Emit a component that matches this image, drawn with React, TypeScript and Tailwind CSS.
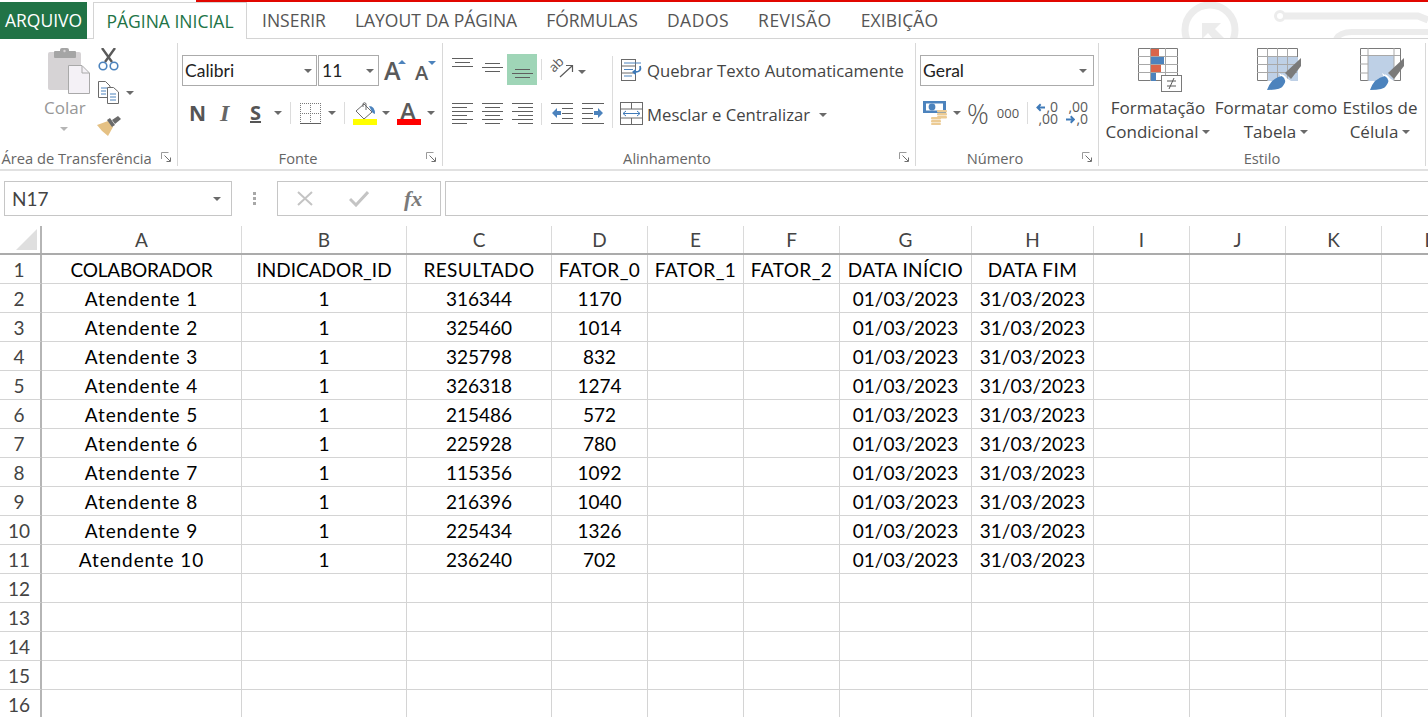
import type { ReactNode } from "react";

const columns = ["A", "B", "C", "D", "E", "F", "G", "H", "I", "J", "K", "L"];

const rows: string[][] = [
  ["COLABORADOR", "INDICADOR_ID", "RESULTADO", "FATOR_0", "FATOR_1", "FATOR_2", "DATA INÍCIO", "DATA FIM"],
  ["Atendente 1", "1", "316344", "1170", "", "", "01/03/2023", "31/03/2023"],
  ["Atendente 2", "1", "325460", "1014", "", "", "01/03/2023", "31/03/2023"],
  ["Atendente 3", "1", "325798", "832", "", "", "01/03/2023", "31/03/2023"],
  ["Atendente 4", "1", "326318", "1274", "", "", "01/03/2023", "31/03/2023"],
  ["Atendente 5", "1", "215486", "572", "", "", "01/03/2023", "31/03/2023"],
  ["Atendente 6", "1", "225928", "780", "", "", "01/03/2023", "31/03/2023"],
  ["Atendente 7", "1", "115356", "1092", "", "", "01/03/2023", "31/03/2023"],
  ["Atendente 8", "1", "216396", "1040", "", "", "01/03/2023", "31/03/2023"],
  ["Atendente 9", "1", "225434", "1326", "", "", "01/03/2023", "31/03/2023"],
  ["Atendente 10", "1", "236240", "702", "", "", "01/03/2023", "31/03/2023"],
];

const gridCols =
  "grid grid-cols-[42px_200px_165px_145px_96px_96px_96px_132px_122px_96px_96px_96px_96px]";

function Caret({ className = "", color = "border-t-[#6a6a6a]" }: { className?: string; color?: string }) {
  return (
    <span
      className={`inline-block w-0 h-0 border-x-[4px] border-x-transparent border-t-[4px] ${color} ${className}`}
    />
  );
}

function Launcher() {
  return (
    <svg width="11" height="11" viewBox="0 0 11 11" className="absolute right-[5px] bottom-[3px]">
      <path d="M0.5 7V0.5H7.5" fill="none" stroke="#9a9a9a" />
      <path d="M3.5 3.5L9 9M9.5 5.5V9.5H5.5" fill="none" stroke="#6f6f6f" />
    </svg>
  );
}

function Group({ label, children, className = "" }: { label: string; children: ReactNode; className?: string }) {
  return (
    <div className={`relative h-[123px] border-r border-[#d8d8d8] shrink-0 ${className}`}>
      {children}
      <div className="absolute left-0 right-0 bottom-[-4px] h-[24px] pr-[24px] text-center text-[14.7px] leading-[24px] whitespace-nowrap text-[#666]">
        {label}
      </div>
      <Launcher />
    </div>
  );
}

function Lines({ widths, gap = 4, align = "start" }: { widths: number[]; gap?: number; align?: "start" | "middle" | "end" }) {
  const h = (widths.length - 1) * gap + 1;
  return (
    <svg width="21" height={h} viewBox={`0 0 21 ${h}`} className="block">
      {widths.map((w, i) => {
        const x = align === "start" ? 0 : align === "end" ? 21 - w : (21 - w) / 2;
        return <rect key={i} x={x} y={i * gap} width={w} height="1" fill="#5f5f5f" />;
      })}
    </svg>
  );
}

function PasteIcon() {
  return (
    <svg width="42" height="46" viewBox="0 0 42 46" className="block">
      <rect x="0" y="4" width="33" height="38" rx="2" fill="#d6d3d5" />
      <rect x="6" y="3" width="22" height="7" rx="1" fill="#a5a5a5" />
      <rect x="12" y="0" width="9" height="6" rx="2" fill="#a5a5a5" />
      <circle cx="16.5" cy="3" r="1.2" fill="#d6d3d5" />
      <path d="M20.5 17.5H34L41.5 25V45.5H20.5Z" fill="#f4f1f6" stroke="#a9a9a9" />
      <path d="M34 18V25H41" fill="none" stroke="#a9a9a9" />
    </svg>
  );
}

function ScissorsIcon() {
  return (
    <svg width="21" height="23" viewBox="0 0 21 23" className="block">
      <path d="M4 0L14 14M17 0L7 14" stroke="#5a5a5a" strokeWidth="2.4" fill="none" />
      <circle cx="5" cy="18" r="3.8" fill="none" stroke="#4c83bd" strokeWidth="1.6" />
      <circle cx="16" cy="18" r="3.8" fill="none" stroke="#4c83bd" strokeWidth="1.6" />
    </svg>
  );
}

function CopyIcon() {
  return (
    <svg width="21" height="23" viewBox="0 0 21 23" className="block">
      <path d="M0.5 0.5H7.5L12 5V16.5H0.5Z" fill="#fff" stroke="#6a6a6a" />
      <path d="M9.5 6.5H15.5L20.5 11V22.5H9.5Z" fill="#fff" stroke="#6a6a6a" />
      <path d="M3 7H9M3 10H8M3 13H8" stroke="#4c83bd" />
      <path d="M12 13H18M12 16H18M12 19H18" stroke="#4c83bd" />
    </svg>
  );
}

function BrushIcon() {
  return (
    <svg width="24" height="21" viewBox="0 0 24 21" className="block">
      <path d="M0 9L11 5L16 11L11 20Q5 16 0 9Z" fill="#e5c184" />
      <path d="M10 4L13 2L18 9L15 11Z" fill="#6a6a6a" />
      <path d="M15 4L21 0L24 3L18 8Z" fill="#6a6a6a" />
    </svg>
  );
}

function GrowIcon({ small = false }: { small?: boolean }) {
  return (
    <span className="relative block w-[20px] h-[24px]">
      <span
        className={`absolute left-0 bottom-0 font-semibold text-[#5a5a5a] leading-none ${small ? "text-[20px] left-[1px]" : "text-[25px]"}`}
      >
        A
      </span>
      {small ? (
        <span className="absolute right-[-2px] top-[2px] w-0 h-0 border-x-[4px] border-x-transparent border-t-[4px] border-t-[#4c83bd]" />
      ) : (
        <span className="absolute right-[-2px] top-[1px] w-0 h-0 border-x-[4px] border-x-transparent border-b-[4px] border-b-[#4c83bd]" />
      )}
    </span>
  );
}

function BorderIcon() {
  return (
    <svg width="21" height="21" viewBox="0 0 21 21" className="block">
      <path
        d="M0 0.5H21M0 10.5H21M0.5 0V20M10.5 0V20M20.5 0V20"
        fill="none"
        stroke="#7a7a7a"
        strokeDasharray="1 1"
      />
      <rect x="0" y="20" width="21" height="1" fill="#5f5f5f" />
    </svg>
  );
}

function FillIcon() {
  return (
    <svg width="24" height="23" viewBox="0 0 24 23" className="block">
      <path d="M3 9L11 2L19 10L11 17Z" fill="#fff" stroke="#6a6a6a" />
      <path d="M10 5V1.5Q11.5 0 13 1.5V8" fill="none" stroke="#6a6a6a" />
      <path d="M16 4Q22 4 22 12Q19 11 18 8Z" fill="#4c83bd" />
      <rect x="0" y="17" width="24" height="6" fill="#ffff00" />
    </svg>
  );
}

function FontColorIcon() {
  return (
    <span className="relative block w-[24px] h-[23px]">
      <span className="absolute left-[3px] top-[-3px] text-[24px] leading-none font-semibold text-[#5a5a5a]">A</span>
      <span className="absolute left-0 bottom-0 w-[24px] h-[6px] bg-[#ff0000]" />
    </span>
  );
}

function OrientIcon() {
  return (
    <svg width="22" height="22" viewBox="0 0 22 22" className="block overflow-visible">
      <text fontSize="13" fill="#5a5a5a" transform="translate(2 14) rotate(-45)" fontFamily="Open Sans, sans-serif">
        ab
      </text>
      <path d="M8 18L20 7M14 6.5H20.5V13" fill="none" stroke="#5a5a5a" strokeWidth="1.2" />
    </svg>
  );
}

function IndentIcon({ flip = false }: { flip?: boolean }) {
  return (
    <svg width="23" height="21" viewBox="0 0 23 21" className="block">
      <g transform={flip ? "translate(23 0) scale(-1 1)" : undefined}>
        <rect x="0" y="0" width="22" height="1" fill="#5f5f5f" />
        <rect x="11" y="5" width="11" height="1" fill="#5f5f5f" />
        <rect x="11" y="10" width="11" height="1" fill="#5f5f5f" />
        <rect x="11" y="15" width="11" height="1" fill="#5f5f5f" />
        <rect x="0" y="20" width="22" height="1" fill="#5f5f5f" />
        <path d="M1 10L6 5V8H10V12H6V15Z" fill="#4c83bd" />
      </g>
    </svg>
  );
}

function WrapIcon() {
  return (
    <svg width="23" height="22" viewBox="0 0 23 22" className="block">
      <rect x="1.5" y="0.5" width="14" height="21" fill="#fff" stroke="#6a6a6a" />
      <path d="M1 7H15M1 14H15" stroke="#6a6a6a" />
      <path d="M4 4H21M4 10.5H13M4 17H12" stroke="#4c83bd" strokeWidth="1" />
      <path d="M20 7Q22 13 15 13" fill="none" stroke="#3f7ab8" strokeWidth="1.8" />
      <path d="M12 13L16 9.5V16.5Z" fill="#3f7ab8" />
    </svg>
  );
}

function MergeIcon() {
  return (
    <svg width="23" height="23" viewBox="0 0 23 23" className="block">
      <rect x="0.5" y="0.5" width="22" height="22" fill="#fff" stroke="#6a6a6a" />
      <path d="M0 7H23M0 16H23M11.5 0V7M11.5 16V23" stroke="#6a6a6a" />
      <path d="M3 11.5H20M3 11.5L6 9M3 11.5L6 14M20 11.5L17 9M20 11.5L17 14" fill="none" stroke="#3f7ab8" />
    </svg>
  );
}

function MoneyIcon() {
  return (
    <svg width="25" height="24" viewBox="0 0 25 24" className="block">
      <rect x="0" y="0" width="23" height="12" fill="#4c83bd" />
      <rect x="3" y="2.5" width="17" height="7" fill="#fff" />
      <circle cx="9" cy="6" r="3.4" fill="#4c83bd" />
      <g fill="#eccb94">
        <rect x="14" y="9" width="10" height="2.4" rx="1" />
        <rect x="14" y="12" width="10" height="2.4" rx="1" />
        <rect x="14" y="15" width="10" height="2.4" rx="1" />
        <rect x="8" y="16" width="10" height="2.4" rx="1" />
        <rect x="8" y="19" width="10" height="2.4" rx="1" />
        <rect x="8" y="22" width="10" height="2" rx="1" />
      </g>
    </svg>
  );
}

function DecimalIcon({ more = false }: { more?: boolean }) {
  return (
    <span className="block w-[22px] h-[24px] text-[14px] leading-[12px] text-[#5a5a5a]">
      {more ? (
        <>
          <span className="flex items-center justify-end h-[12px]">
            <svg width="10" height="9" viewBox="0 0 10 9" className="mr-[1px]">
              <path d="M10 4.5H3M5 1L1.5 4.5L5 8" fill="none" stroke="#3f7ab8" strokeWidth="2" />
            </svg>
            ,0
          </span>
          <span className="block h-[12px] text-right">,00</span>
        </>
      ) : (
        <>
          <span className="block h-[12px] text-right">,00</span>
          <span className="flex items-center justify-end h-[12px]">
            <svg width="10" height="9" viewBox="0 0 10 9" className="mr-[1px]">
              <path d="M0 4.5H7M5 1L8.5 4.5L5 8" fill="none" stroke="#3f7ab8" strokeWidth="2" />
            </svg>
            ,0
          </span>
        </>
      )}
    </span>
  );
}

function CondFormatIcon() {
  return (
    <svg width="45" height="45" viewBox="0 0 45 45" className="block">
      <path d="M0.5 0.5H39.5V32.5H0.5Z" fill="#fff" stroke="#7a7a7a" />
      <path d="M0 8.5H40M0 16.5H40M0 24.5H40M12.5 0V33M27.5 0V33" stroke="#a8a8a8" />
      <rect x="13" y="1" width="8" height="7" fill="#d9654a" />
      <rect x="13" y="9" width="13" height="7" fill="#4c83bd" />
      <rect x="13" y="17" width="10" height="7" fill="#d9654a" />
      <rect x="13" y="25" width="5" height="8" fill="#4c83bd" />
      <rect x="23.5" y="27.5" width="20" height="16" fill="#fff" stroke="#7a7a7a" />
      <path d="M29 33H38M29 38H38M36 30L31 41" stroke="#5a5a5a" fill="none" />
    </svg>
  );
}

function TableStyleIcon({ full = false }: { full?: boolean }) {
  return (
    <svg width="44" height="42" viewBox="0 0 44 42" className="block">
      <path d="M0.5 0.5H40.5V32.5H0.5Z" fill="#fff" stroke="#7a7a7a" />
      {full ? (
        <>
          <rect x="8" y="7" width="26" height="26" fill="#bed0e6" />
          <path d="M0 7.5H40M8 0V33M34 0V33M0 16H8M0 25H8" stroke="#a8a8a8" />
        </>
      ) : (
        <>
          <rect x="10" y="9" width="31" height="24" fill="#bed0e6" />
          <path d="M0 8.5H40M0 16.5H40M0 24.5H40M10.5 0V33M20.5 0V33M30.5 0V33" stroke="#a8a8a8" />
        </>
      )}
      <path d="M28 25L44 10V18L34 31Z" fill="#7a7a7a" />
      <path d="M22 25L34 33L28 39" fill="#fff" />
      <path d="M10 42Q14 30 25 28Q31 32 26 38Q24 42 10 42Z" fill="#4c83bd" />
      <path d="M25 27Q33 31 28 39" fill="none" stroke="#fff" strokeWidth="1.5" />
    </svg>
  );
}

function Watermark() {
  return (
    <svg width="260" height="36" viewBox="0 0 260 36" className="absolute right-0 top-0">
      <circle cx="42" cy="28" r="25" fill="none" stroke="#ececec" strokeWidth="7" />
      <path d="M34 21H53L47 27L57 37H45L40 31L34 37Z" fill="#ececec" />
      <circle cx="112" cy="14" r="4.5" fill="none" stroke="#ececec" strokeWidth="3" />
      <path d="M117 14H250L260 18" fill="none" stroke="#ececec" strokeWidth="7" />
      <path d="M168 37Q172 30 184 30H260" fill="none" stroke="#ececec" strokeWidth="6" />
    </svg>
  );
}

function Separator({ className = "" }: { className?: string }) {
  return <span className={`block w-px bg-[#dcdcdc] ${className}`} />;
}

function cellTracking(r: number, i: number) {
  if (r === 0) return i > 1 ? "tracking-[0.4px]" : i === 0 ? "tracking-[-0.2px]" : "";
  return i === 0 ? "tracking-[0.9px]" : "";
}

export default function App() {
  return (
    <div className="w-[1428px] h-[717px] overflow-hidden bg-white font-['Open_Sans',sans-serif] text-[#444]">
      <div className="h-[2px] ml-[196px] bg-[#e10600]" />

      <div className="relative flex h-[37px] border-b border-[#d4d4d4] text-[17.5px]">
        <Watermark />
        <div className="w-[87px] h-[37px] bg-[#217346] text-white flex items-center justify-center">ARQUIVO</div>
        <div className="relative ml-[6px] w-[154px] h-[37px] bg-white border-x border-t border-[#d4d4d4] text-[#217346] flex items-center justify-center whitespace-nowrap">
          PÁGINA INICIAL
        </div>
        <div className="relative flex items-center gap-[29px] ml-[15px] text-[#555] whitespace-nowrap">
          <span>INSERIR</span>
          <span>LAYOUT DA PÁGINA</span>
          <span>FÓRMULAS</span>
          <span className="tracking-[0.5px]">DADOS</span>
          <span className="tracking-[0.5px]">REVISÃO</span>
          <span className="tracking-[0.1px]">EXIBIÇÃO</span>
        </div>
      </div>

      <div className="flex h-[132px] pt-[4px] border-b-2 border-[#e1e1e1]">
        <Group label="Área de Transferência" className="w-[178px]">
          <div className="flex pl-[44px] pt-[5px]">
            <div className="w-[54px] flex flex-col items-start">
              <div className="ml-[4px]"><PasteIcon /></div>
              <span className="mt-[3px] text-[17px] leading-[22px] text-[#979797]">Colar</span>
              <Caret className="ml-[16px] mt-[8px]" color="border-t-[#b5b5b5]" />
            </div>
            <div className="flex flex-col">
              <ScissorsIcon />
              <div className="flex items-center mt-[10px] gap-[7px]">
                <CopyIcon />
                <Caret />
              </div>
              <div className="mt-[12px] -ml-[1px]"><BrushIcon /></div>
            </div>
          </div>
        </Group>

        <Group label="Fonte" className="w-[265px]">
          <div className="flex items-start pl-[4px] pt-[12px]">
            <div className="w-[135px] h-[31px] border border-[#ababab] flex items-center justify-between pl-[2px] pr-[4px] text-[17.5px] text-[#222]">
              <span className="font-['Lato',sans-serif] pt-[2px]">Calibri</span>
              <Caret />
            </div>
            <div className="w-[61px] h-[31px] ml-[1px] border border-[#ababab] flex items-center justify-between pl-[3px] pr-[4px] text-[17.5px] text-[#222]">
              <span className="font-['Lato',sans-serif] pt-[2px]">11</span>
              <Caret />
            </div>
            <div className="ml-[5px] mt-[4px] flex gap-[10px]">
              <GrowIcon />
              <GrowIcon small />
            </div>
          </div>
          <div className="flex items-center pl-[11px] mt-[15px] h-[24px] text-[#555]">
            <span className="w-[31px] text-[21px] font-bold leading-none">N</span>
            <span className="w-[30px] text-[24px] italic font-bold leading-none font-['Liberation_Serif',serif] text-[#666]">I</span>
            <span className="w-[20px] text-[20px] font-bold underline leading-none">S</span>
            <Caret className="ml-[4px]" />
            <Separator className="h-[22px] ml-[8px]" />
            <div className="ml-[9px]"><BorderIcon /></div>
            <Caret className="ml-[7px]" />
            <Separator className="h-[22px] ml-[8px]" />
            <div className="ml-[8px] mt-[1px]"><FillIcon /></div>
            <Caret className="ml-[5px]" />
            <div className="ml-[7px] mt-[1px]"><FontColorIcon /></div>
            <Caret className="ml-[6px]" />
          </div>
        </Group>

        <Group label="Alinhamento" className="w-[473px]">
          <div className="flex h-[32px] mt-[11px] pl-[9px] items-start">
            <div className="mt-[4px]"><Lines widths={[21, 15, 21]} gap={4} align="middle" /></div>
            <div className="ml-[9px] mt-[9px]"><Lines widths={[15, 21, 15]} gap={4} align="middle" /></div>
            <div className="ml-[4px] w-[30px] h-[31px] bg-[#9fd5b7] flex justify-center pt-[15px]">
              <Lines widths={[15, 21, 15]} gap={4} align="middle" />
            </div>
            <Separator className="h-[21px] ml-[4px] mt-[5px]" />
            <div className="ml-[10px] mt-[5px]"><OrientIcon /></div>
            <Caret className="ml-[4px] mt-[16px]" />
            <Separator className="h-[72px] ml-[26px] mt-[2px]" />
            <div className="ml-[7px] mt-[5px]"><WrapIcon /></div>
            <span className="ml-[4px] mt-[5px] text-[16.7px] leading-[24px] whitespace-nowrap text-[#444]">
              Quebrar Texto Automaticamente
            </span>
          </div>
          <div className="flex h-[32px] mt-[11px] pl-[9px] items-start">
            <div className="mt-[6px]"><Lines widths={[21, 15, 21, 15, 21, 15]} gap={4} align="start" /></div>
            <div className="ml-[9px] mt-[6px]"><Lines widths={[21, 15, 21, 15, 21, 15]} gap={4} align="middle" /></div>
            <div className="ml-[9px] mt-[6px]"><Lines widths={[21, 15, 21, 15, 21, 15]} gap={4} align="end" /></div>
            <Separator className="h-[22px] ml-[8px] mt-[6px]" />
            <div className="ml-[9px] mt-[6px]"><IndentIcon /></div>
            <div className="ml-[7px] mt-[6px]"><IndentIcon flip /></div>
            <div className="ml-[16px] mt-[5px]"><MergeIcon /></div>
            <span className="ml-[4px] mt-[6px] text-[16.7px] leading-[24px] whitespace-nowrap text-[#444]">
              Mesclar e Centralizar
            </span>
            <Caret className="ml-[9px] mt-[16px]" />
          </div>
        </Group>

        <Group label="Número" className="w-[183px]">
          <div className="ml-[4px] mt-[12px] w-[174px] h-[31px] border border-[#ababab] flex items-center justify-between pl-[2px] pr-[6px] text-[17.5px] text-[#222]">
            <span className="font-['Lato',sans-serif] pt-[2px]">Geral</span>
            <Caret />
          </div>
          <div className="flex items-center pl-[7px] mt-[15px] h-[24px]">
            <MoneyIcon />
            <Caret className="ml-[5px]" />
            <span className="ml-[6px] text-[27px] leading-none font-light text-[#555]">%</span>
            <span className="ml-[8px] text-[13px] leading-none text-[#555]">000</span>
            <Separator className="h-[22px] ml-[8px]" />
            <div className="ml-[8px]"><DecimalIcon more /></div>
            <div className="ml-[8px]"><DecimalIcon /></div>
          </div>
        </Group>

        <div className="relative w-[327px] h-[123px] border-r border-[#d8d8d8] shrink-0">
          <div className="flex pt-[5px] text-[17px] leading-[24px] text-[#444]">
            <div className="w-[116px] ml-[1px] flex flex-col items-center">
              <div className="ml-[5px] h-[44px]"><CondFormatIcon /></div>
              <span className="mt-[4px]">Formatação</span>
              <span className="flex items-center gap-[4px]">Condicional <Caret /></span>
            </div>
            <div className="w-[120px] flex flex-col items-center">
              <div className="ml-[6px] h-[44px]"><TableStyleIcon /></div>
              <span className="mt-[4px] whitespace-nowrap">Formatar como</span>
              <span className="flex items-center gap-[4px]">Tabela <Caret /></span>
            </div>
            <div className="w-[88px] flex flex-col items-center">
              <div className="ml-[4px] h-[44px]"><TableStyleIcon full /></div>
              <span className="mt-[4px] whitespace-nowrap">Estilos de</span>
              <span className="flex items-center gap-[4px]">Célula <Caret /></span>
            </div>
          </div>
          <div className="absolute left-0 right-0 bottom-[-4px] h-[24px] text-center text-[14.7px] leading-[24px] text-[#666]">
            Estilo
          </div>
        </div>
      </div>

      <div className="flex items-stretch h-[35px] mt-[10px] pl-[4px]">
        <div className="w-[228px] border border-[#c6c6c6] flex items-center justify-between pl-[7px] pr-[10px] text-[19px] font-['Lato',sans-serif] text-[#444]">
          <span className="pt-[2px]">N17</span>
          <Caret />
        </div>
        <div className="w-[45px] flex flex-col items-center justify-center gap-[2px]">
          <span className="w-[3px] h-[3px] bg-[#a8a8a8]" />
          <span className="w-[3px] h-[3px] bg-[#a8a8a8]" />
          <span className="w-[3px] h-[3px] bg-[#a8a8a8]" />
        </div>
        <div className="w-[164px] border border-[#c6c6c6] flex items-center pl-[18px]">
          <svg width="18" height="17" viewBox="0 0 18 17">
            <path d="M2 2L16 15M16 2L2 15" stroke="#c4c4c4" strokeWidth="2" fill="none" />
          </svg>
          <svg width="20" height="17" viewBox="0 0 20 17" className="ml-[35px]">
            <path d="M1 9L7 15L19 2" stroke="#c4c4c4" strokeWidth="3" fill="none" />
          </svg>
          <span className="ml-[35px] text-[22px] italic font-bold font-['Liberation_Serif',serif] text-[#7a7a7a]">fx</span>
        </div>
        <div className="flex-1 ml-[4px] border-y border-l border-[#c6c6c6]" />
      </div>

      <div className="mt-[10px] font-['Lato',sans-serif] text-[19px] leading-[20px] text-black">
        <div className={`${gridCols} h-[29px] border-b-2 border-[#ababab] text-[#444]`}>
          <div className="relative border-r-2 border-[#b5b5b5]">
            <span className="absolute right-[3px] bottom-[3px] w-0 h-0 border-l-[21px] border-l-transparent border-b-[21px] border-b-[#dfdfdf]" />
          </div>
          {columns.map((c) => (
            <div key={c} className="border-r border-[#dadada] flex items-center justify-center pt-[1px]">
              {c}
            </div>
          ))}
        </div>
        {Array.from({ length: 16 }).map((_, r) => {
          const row = rows[r] ?? [];
          return (
            <div key={r} className={`${gridCols} h-[29px]`}>
              <div className="border-r-2 border-b border-r-[#b5b5b5] border-b-[#d4d4d4] text-[#444] flex items-center justify-center pr-[2px] pt-[1px]">
                {r + 1}
              </div>
              {columns.map((c, i) => (
                <div
                  key={c}
                  className={`border-r border-b border-[#d4d4d4] flex items-center justify-center whitespace-nowrap pt-[1px] ${cellTracking(r, i)}`}
                >
                  {row[i] ?? ""}
                </div>
              ))}
            </div>
          );
        })}
      </div>
    </div>
  );
}
